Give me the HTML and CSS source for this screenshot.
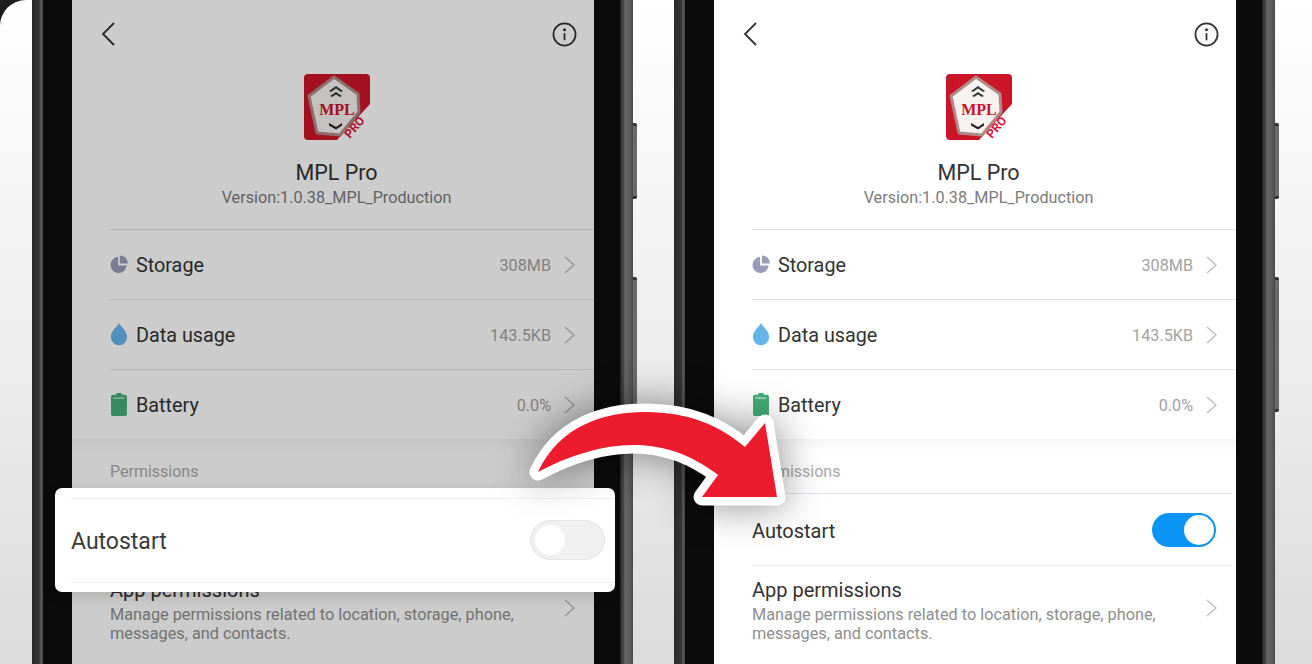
FILE: index.html
```html
<!DOCTYPE html>
<html lang="en">
<head>
<meta charset="utf-8">
<title>MPL Pro autostart</title>
<link rel="stylesheet" href="styles.css">
</head>
<body>
<main class="stage">
  <section class="phone">
    <div class="edge edge-left"></div>
    <div class="screen">
      <header class="topbar">
        <svg class="back" viewBox="0 0 14 24"><path d="M13 1 2 12l11 11"/></svg>
        <svg class="info" viewBox="0 0 26 26"><circle cx="13" cy="13" r="11.5"/><circle class="dot" cx="13" cy="8" r="1.6"/><path d="M13 11.5v7.5"/></svg>
      </header>
      <div class="app">
        <svg class="logo" viewBox="0 0 66 66">
          <path d="M4 0H62a4 4 0 0 1 4 4V30L33 66H4a4 4 0 0 1-4-4V4a4 4 0 0 1 4-4z" fill="#cc1428"/>
          <path d="M30 3 54 20 55 38 36 61 13 59 5 22z" fill="#f6f2f0" stroke="#b08a86" stroke-width="3" stroke-linejoin="round"/>
          <path d="M25 17l7-5 7 5-2 1-5-3.500-5 3.500zM26 22l6-4 6 4-2 1-4-2.500-4 2.500z" fill="#3a3a3a"/>
          <path d="M25 49l7 4 6-4v2.500l-6 4-7-4z" fill="#222"/>
          <text class="logo-mpl" x="33" y="41" text-anchor="middle">MPL</text>
          <text class="logo-pro" x="0" y="0" transform="translate(46 65) rotate(-50)">PRO</text>
        </svg>
        <h1 class="app-name">MPL Pro</h1>
        <p class="app-version">Version:1.0.38_MPL_Production</p>
      </div>
      <ul class="rows">
        <li class="row"><svg class="ri" viewBox="0 0 20 20"><path d="M9 1.500A9 9 0 1 0 18.500 11H9z" fill="#9c9cb8"/><path d="M11 0a9 9 0 0 1 9 9h-9z" fill="#9c9cb8"/></svg><span class="row-name">Storage</span><span class="row-val">308MB</span><svg class="chev" viewBox="0 0 12 20"><path d="M1 1l10 9-10 9"/></svg></li>
        <li class="row"><svg class="ri" viewBox="0 0 20 25"><path d="M10 0c2 4 9 8 9 15.500a9 9 0 0 1-18 0C1 8 8 4 10 0z" fill="#66b5ea"/></svg><span class="row-name">Data usage</span><span class="row-val">143.5KB</span><svg class="chev" viewBox="0 0 12 20"><path d="M1 1l10 9-10 9"/></svg></li>
        <li class="row"><svg class="ri" viewBox="0 0 20 26"><path d="M7 0h6v2h4a2 2 0 0 1 2 2v20a2 2 0 0 1-2 2H3a2 2 0 0 1-2-2V4a2 2 0 0 1 2-2h4z" fill="#45ad77"/><path d="M4 5h12v1.500H4z" fill="#b5e2c8"/></svg><span class="row-name">Battery</span><span class="row-val">0.0%</span><svg class="chev" viewBox="0 0 12 20"><path d="M1 1l10 9-10 9"/></svg></li>
      </ul>
      <div class="band"></div>
      <h2 class="section">Permissions</h2>
      <div class="auto"><span class="auto-name">Autostart</span><span class="toggle on"><i></i></span></div>
      <div class="perm">
        <div class="perm-text">
          <h3 class="perm-title">App permissions</h3>
          <p class="perm-desc">Manage permissions related to location, storage, phone, messages, and contacts.</p>
        </div>
        <svg class="chev" viewBox="0 0 12 20"><path d="M1 1l10 9-10 9"/></svg>
      </div>
      <div class="dim"></div>
    </div>
    <div class="edge edge-right"></div>
    <div class="key key-a"></div>
    <div class="key key-b"></div>
    <div class="card">
      <span class="card-name">Autostart</span>
      <span class="toggle off"><i></i></span>
    </div>
  </section>

  <section class="phone">
    <div class="edge edge-left"></div>
    <div class="screen">
      <header class="topbar">
        <svg class="back" viewBox="0 0 14 24"><path d="M13 1 2 12l11 11"/></svg>
        <svg class="info" viewBox="0 0 26 26"><circle cx="13" cy="13" r="11.5"/><circle class="dot" cx="13" cy="8" r="1.6"/><path d="M13 11.5v7.5"/></svg>
      </header>
      <div class="app">
        <svg class="logo" viewBox="0 0 66 66">
          <path d="M4 0H62a4 4 0 0 1 4 4V30L33 66H4a4 4 0 0 1-4-4V4a4 4 0 0 1 4-4z" fill="#cc1428"/>
          <path d="M30 3 54 20 55 38 36 61 13 59 5 22z" fill="#f6f2f0" stroke="#b08a86" stroke-width="3" stroke-linejoin="round"/>
          <path d="M25 17l7-5 7 5-2 1-5-3.500-5 3.500zM26 22l6-4 6 4-2 1-4-2.500-4 2.500z" fill="#3a3a3a"/>
          <path d="M25 49l7 4 6-4v2.500l-6 4-7-4z" fill="#222"/>
          <text class="logo-mpl" x="33" y="41" text-anchor="middle">MPL</text>
          <text class="logo-pro" x="0" y="0" transform="translate(46 65) rotate(-50)">PRO</text>
        </svg>
        <h1 class="app-name">MPL Pro</h1>
        <p class="app-version">Version:1.0.38_MPL_Production</p>
      </div>
      <ul class="rows">
        <li class="row"><svg class="ri" viewBox="0 0 20 20"><path d="M9 1.500A9 9 0 1 0 18.500 11H9z" fill="#9c9cb8"/><path d="M11 0a9 9 0 0 1 9 9h-9z" fill="#9c9cb8"/></svg><span class="row-name">Storage</span><span class="row-val">308MB</span><svg class="chev" viewBox="0 0 12 20"><path d="M1 1l10 9-10 9"/></svg></li>
        <li class="row"><svg class="ri" viewBox="0 0 20 25"><path d="M10 0c2 4 9 8 9 15.500a9 9 0 0 1-18 0C1 8 8 4 10 0z" fill="#66b5ea"/></svg><span class="row-name">Data usage</span><span class="row-val">143.5KB</span><svg class="chev" viewBox="0 0 12 20"><path d="M1 1l10 9-10 9"/></svg></li>
        <li class="row"><svg class="ri" viewBox="0 0 20 26"><path d="M7 0h6v2h4a2 2 0 0 1 2 2v20a2 2 0 0 1-2 2H3a2 2 0 0 1-2-2V4a2 2 0 0 1 2-2h4z" fill="#45ad77"/><path d="M4 5h12v1.500H4z" fill="#b5e2c8"/></svg><span class="row-name">Battery</span><span class="row-val">0.0%</span><svg class="chev" viewBox="0 0 12 20"><path d="M1 1l10 9-10 9"/></svg></li>
      </ul>
      <div class="band"></div>
      <h2 class="section">Permissions</h2>
      <div class="auto"><span class="auto-name">Autostart</span><span class="toggle on"><i></i></span></div>
      <div class="perm">
        <div class="perm-text">
          <h3 class="perm-title">App permissions</h3>
          <p class="perm-desc">Manage permissions related to location, storage, phone, messages, and contacts.</p>
        </div>
        <svg class="chev" viewBox="0 0 12 20"><path d="M1 1l10 9-10 9"/></svg>
      </div>
    </div>
    <div class="edge edge-right"></div>
    <div class="key key-a"></div>
    <div class="key key-b"></div>
  </section>

  <svg class="arrow" viewBox="0 0 1312 664">
    <path d="M538 472C560 425 605 412 645 412C690 412 720 426 745 447L765 423L777 497L702 497L718 475C692 455 665 445 633 445C603 445 570 455 538 472Z"/>
  </svg>
</main>
</body>
</html>
```
FILE: styles.css
```css
* { box-sizing: border-box; }
html, body { margin: 0; padding: 0; height: 664px; overflow: hidden; background: #1c1c1c; }
body { font-family: Roboto, "Liberation Sans", sans-serif; }
h1, h2, h3, p, ul { margin: 0; padding: 0; font-weight: 400; }
ul { list-style: none; }

.stage {
  position: relative;
  display: flex;
  gap: 41px;
  width: 1312px;
  height: 664px;
  padding-left: 32px;
  overflow: hidden;
  border-top-left-radius: 26px;
  background: linear-gradient(180deg, #ffffff 0%, #f6f5f6 30%, #dcdcdc 100%);
}
.phone { position: relative; display: flex; width: 601px; height: 664px; flex: none; }
.edge { flex: none; height: 100%; background-color: #0b0b0b; }
.edge-left {
  width: 40px;
  background-image: linear-gradient(90deg, #2b2b2b 0, #333 7px, #5a5a5a 9px, #4c4c4c 10.500px, #0b0b0b 11px);
}
.edge-right {
  width: 39px;
  background-image: linear-gradient(90deg, #0b0b0b 26px, #3c3c3c 27px, #3c3c3c 29px, #666 31px, #5a5a5a 36px, #494949 39px);
}
.key { position: absolute; left: 601px; width: 4px; background: #6a6a6a; border-radius: 0 2px 2px 0; border-top: 3px solid #333; border-bottom: 3px solid #333; }
.key-a { top: 123px; height: 76px; }
.key-b { top: 277px; height: 135px; }

.screen { position: relative; width: 522px; height: 664px; flex: none; overflow: hidden; background: #fff; color: #333; }
.dim { position: absolute; inset: 0; background: rgba(0, 0, 0, .2); }

.topbar { display: flex; justify-content: space-between; align-items: center; height: 68px; padding: 0 17px 0 29px; }
.back { width: 14px; height: 24px; fill: none; stroke: #333; stroke-width: 1.800; }
.info { width: 25px; height: 25px; fill: none; stroke: #333; stroke-width: 1.800; }
.info .dot { fill: #333; stroke: none; }

.app { display: flex; flex-direction: column; align-items: center; padding: 6px 0 0 7px; height: 161px; }
.logo { width: 66px; height: 66px; flex: none; overflow: visible; }
.logo-mpl { font: 700 16px "Liberation Serif", serif; fill: #c8142a; }
.logo-pro { font: 700 12px Roboto, sans-serif; fill: #d9163a; }
.app-name { margin-top: 21px; font-size: 21.500px; line-height: 24px; color: #333; }
.app-version { margin-top: 3px; font-size: 16.200px; line-height: 20px; color: #7c7c7c; }

.rows { padding-left: 38px; }
.row { display: flex; align-items: center; height: 70px; border-top: 1px solid #e2e2e2; padding-right: 19px; }
.ri { width: 18px; height: 23px; flex: none; margin-right: 8px; }
.row-name { flex: 1; padding-top: 3px; font-size: 19.800px; line-height: 24px; color: #333; }
.row-val { padding-top: 1px; font-size: 16.200px; color: #a3a3a3; margin-right: 13px; }
.chev { width: 11px; height: 18px; flex: none; fill: none; stroke: #bdbdbd; stroke-width: 1.500; }

.band { height: 12px; background: linear-gradient(180deg, #f5f5f5, #fff); }
.section { height: 42px; padding: 11px 0 0 38px; font-size: 16px; line-height: 20px; color: #aaa; }

.auto { display: flex; align-items: center; justify-content: space-between; margin: 0 4px 0 38px; height: 73px; padding-right: 16px; border-top: 1px solid #e4e4ec; border-bottom: 1px solid #f0f0f0; }
.auto-name { padding-top: 2px; font-size: 20px; color: #333; }
.toggle { display: flex; align-items: center; border-radius: 20px; }
.toggle i { display: block; border-radius: 50%; background: #fff; }
.toggle.on { width: 64px; height: 34px; padding: 0 2px; justify-content: flex-end; background: #0a94f5; }
.toggle.on i { width: 30px; height: 30px; }
.toggle.off { width: 75px; height: 40px; padding: 0 4px; background: #f0f0f0; border: 1px solid #e6e6e6; }
.toggle.off i { width: 30px; height: 30px; }

.perm { display: flex; align-items: center; padding: 13px 19px 0 38px; }
.perm-text { flex: 1; padding-right: 30px; }
.perm-title { font-size: 20px; line-height: 22px; color: #333; }
.perm-desc { margin-top: 4px; font-size: 16.300px; line-height: 19px; color: #8f8f8f; }
.perm .chev { margin-top: -6px; }

.card {
  position: absolute;
  left: 23px;
  top: 488px;
  width: 560px;
  height: 104px;
  display: flex;
  align-items: center;
  justify-content: space-between;
  padding: 0 10px 0 16px;
  background: #fff;
  border-radius: 7px;
  box-shadow: 0 4px 14px rgba(0, 0, 0, .15);
}
.card::before, .card::after { content: ""; position: absolute; left: 16px; right: 0; height: 1px; background: #f1f1f1; }
.card::before { top: 10px; }
.card::after { bottom: 9px; }
.card-name { padding-top: 2px; font-size: 23px; color: #3a3a3a; }

.arrow { position: absolute; left: 0; top: 0; width: 1312px; height: 664px; filter: drop-shadow(0 0 20px rgba(0, 0, 0, .45)); }
.arrow path { fill: #ec1b2e; stroke: #fff; stroke-width: 17; stroke-linejoin: round; paint-order: stroke; }
```
